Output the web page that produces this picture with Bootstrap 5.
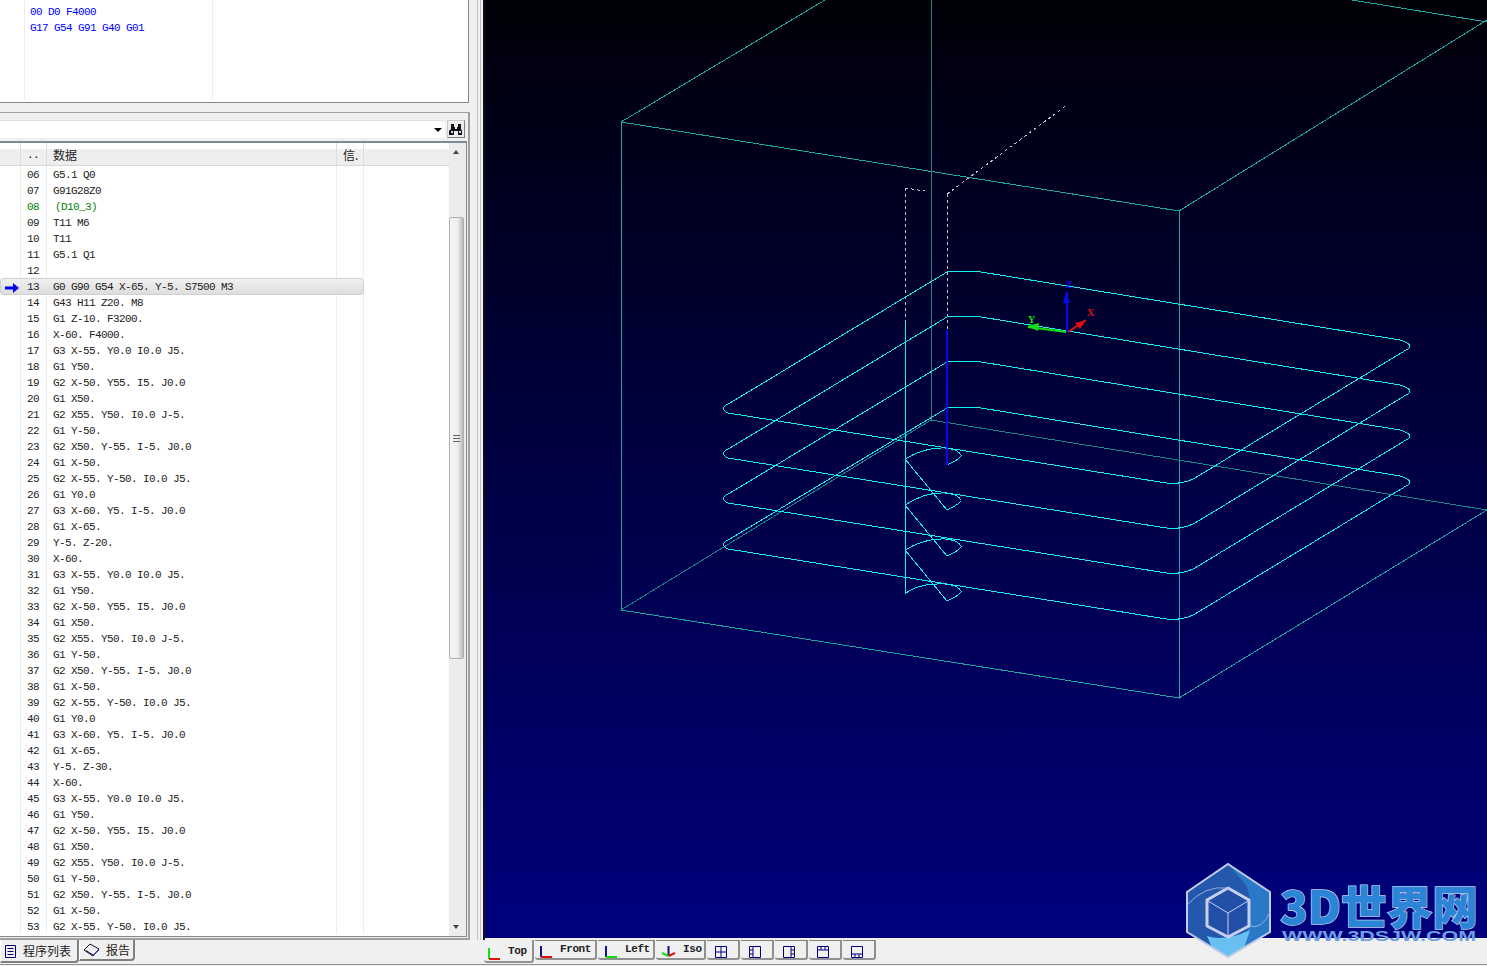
<!DOCTYPE html>
<html lang="en">

<head>
    <meta charset="UTF-8" />
    <meta name="viewport" content="width=device-width, initial-scale=1.0" />
    <title>NC Program Viewer</title>
    <link href="https://cdn.jsdelivr.net/npm/bootstrap@5.3.0/dist/css/bootstrap.min.css" rel="stylesheet" />
    <style>
        html, body {
            height: 966px;
            overflow: hidden;
        }

        body {
            background-color: #f0f0f0;
            font-family: "Liberation Mono", "Noto Sans CJK SC", monospace;
            font-size: 11px;
            line-height: 16px;
            letter-spacing: -0.6px;
            color: #222;
            position: relative;
        }

        .main-area { height: 940px; }

        /* left side */
        .left-pane { width: 470px; }

        .code-panel {
            height: 103px;
            width: 469px;
            background: #fff;
            border: 1px solid #808890;
            border-width: 0 1px 1px 0;
            position: relative;
            color: #0000ff;
        }

        .code-col {
            height: 100px;
            border-right: 1px solid #e4f0f0;
            padding-top: 4px;
        }

        .gutter-a { width: 25px; }
        .code-col-b { width: 188px; padding-left: 5px; }

        .list-panel {
            margin-top: 9px;
            height: 828px;
            border: 1px solid #a0a0a0;
            border-width: 1px 2px 2px 0;
            padding-top: 7px;
        }

        .combo-row { height: 21px; padding-right: 2px; }

        .combo-box {
            width: 445px;
            height: 18px;
            background: #fff;
            border-top: 1px solid #e0e0e0;
            border-radius: 0 3px 3px 0;
        }

        .caret-down {
            width: 0;
            height: 0;
            border: 4px solid transparent;
            border-top: 4px solid #000;
            border-bottom: 0;
            margin-right: 3px;
        }

        .find-btn {
            width: 18px;
            height: 18px;
            margin-left: 2px;
            border: 1px solid #c8c8c8;
            border-right-color: #808080;
            border-bottom-color: #808080;
            background: #ececec;
        }

        .grid-box {
            height: 796px;
            width: 467px;
            border: 1px solid #808890;
            border-width: 2px 1px 1px 0;
            background: #fff;
        }

        .grid-body { width: 449px; }

        .grid-head {
            height: 23px;
            background: linear-gradient(#fff 0, #fff 25%, #eeeeee 30%, #eeeeee 100%);
            border-bottom: 1px solid #d8d4dc;
        }

        .grid-head .cell { border-right: 1px solid #ddd; padding-top: 4px; }

        .grid-row { height: 16px; }
        .grid-row .cell { border-right: 1px solid #e8f0f0; padding-top: 1px; }

        .cell-mark { width: 21px; flex: none; }
        .cell-no { width: 26px; flex: none; padding-left: 6px; }
        .cell-data { width: 290px; flex: none; padding-left: 6px; white-space: pre; }
        .cell-info { width: 27px; flex: none; padding-left: 6px; }

        .row-note .cell-data { padding-left: 8px; }

        .grid-head .cell-data, .grid-head .cell-info {
            font-family: "Noto Sans CJK SC", sans-serif;
            font-size: 12px;
            letter-spacing: 0;
        }

        .row-note { color: #008000; }

        .row-current {
            background: linear-gradient(#f0f0f0, #dedede);
            border: 1px solid #d0d0d0;
            border-radius: 3px;
            width: 364px;
            height: 17px;
            margin-bottom: -1px;
            position: relative;
            z-index: 1;
        }

        .row-current .cell { border-right: 0; line-height: 15px; }
        .row-current .cell-mark { width: 20px; }

        .scroll-bar {
            width: 17px;
            background: #ececec;
            position: relative;
        }

        .scroll-thumb {
            position: absolute;
            top: 74px;
            left: 0;
            width: 15px;
            height: 442px;
            background: linear-gradient(90deg, #f4f4f4, #eeeeee 60%, #b8b8b8);
            border: 1px solid #b0b0b0;
            border-radius: 2px;
        }

        .grip {
            position: absolute;
            left: 3px;
            top: 217px;
            width: 7px;
            height: 7px;
            border-top: 1px solid #666;
            border-bottom: 1px solid #666;
        }

        .grip::after {
            content: "";
            position: absolute;
            left: 0;
            right: 0;
            top: 2px;
            border-top: 1px solid #666;
        }

        .arrow-up, .arrow-down {
            position: absolute;
            left: 4px;
            width: 0;
            height: 0;
            border: 3.5px solid transparent;
        }

        .arrow-up { top: 7px; border-bottom: 4px solid #444; border-top: 0; }
        .arrow-down { bottom: 7px; border-top: 4px solid #444; border-bottom: 0; }

        /* splitter and 3d view */
        .split-bar {
            width: 15px;
            background: #f0f0f0;
            border-right: 2px solid #101018;
            position: relative;
        }

        .split-bar::before {
            content: "";
            position: absolute;
            left: 7px;
            top: 0;
            bottom: 0;
            border-left: 1px solid #c0c0c0;
            border-right: 1px solid #c0c0c0;
            width: 4px;
        }

        .view-3d {
            width: 1002px;
            height: 938px;
            background: linear-gradient(#000008, #00007e);
        }

        .view-3d svg { display: block; }

        .axis-label {
            font-family: "Liberation Serif", serif;
            font-size: 10px;
            font-weight: 700;
            letter-spacing: 0;
        }

        /* bottom tabs */
        .tab-strip {
            height: 25px;
            font-family: "Noto Sans CJK SC", sans-serif;
            font-size: 12px;
            letter-spacing: 0;
            border-bottom: 1px solid #909090;
        }

        .sheet-tab {
            height: 21px;
            background: #f0f0f0;
            border: 0;
            border-right: 2px solid #808080;
            border-bottom: 2px solid #808080;
            border-left: 1px solid #fff;
            border-radius: 0 0 4px 0;
            padding: 0 0 0 3px;
            gap: 6px;
            line-height: 18px;
            white-space: nowrap;
        }

        .sheet-tab svg { flex: none; }
        .sheet-tab.is-on { height: 23px; }

        .tab-program { width: 79px; }
        .tab-report { width: 56px; }

        .view-tabs {
            margin-left: 349px;
            font-family: "Liberation Mono", monospace;
            font-size: 11px;
            font-weight: 700;
        }

        .view-tab {
            height: 20px;
            background: #f0f0f0;
            border-right: 2px solid #909090;
            border-bottom: 2px solid #909090;
            border-top: 1px solid #808080;
            border-radius: 0 0 3px 3px;
            padding-left: 7px;
            gap: 7px;
            letter-spacing: -0.4px;
            margin-right: 1px;
        }

        .view-tab.is-on { height: 23px; border-top: 0; }
        .tab-top { width: 50px; padding-left: 4px; padding-top: 3px; }
        .tab-front { width: 62px; padding-left: 5px; }
        .tab-left { width: 57px; padding-left: 7px; }
        .tab-iso { width: 50px; padding-left: 5px; }
        .tab-split { width: 33px; }

        .brand-mark {
            position: absolute;
            left: 1180px;
            top: 858px;
        }

        .brand-name {
            font-family: "Noto Sans CJK SC", sans-serif;
            font-weight: 900;
            font-size: 46px;
            letter-spacing: 0;
            fill: #2c84d6;
            stroke: #bcd0f0;
            stroke-width: 1.4px;
            paint-order: stroke;
        }

        .brand-url {
            font-family: "Liberation Sans", sans-serif;
            font-weight: 700;
            font-size: 14px;
            letter-spacing: 0;
            fill: #6e9fe4;
        }
    </style>
</head>

<body>
    <div class="main-area d-flex">

        <!-- Program listing -->
        <div class="left-pane flex-shrink-0">
            <div class="code-panel d-flex">
                <div class="code-col gutter-a"></div>
                <div class="code-col code-col-b">
                    <div>00 D0 F4000</div>
                    <div>G17 G54 G91 G40 G01</div>
                </div>
            </div>

            <div class="list-panel">
                <div class="combo-row d-flex">
                    <div class="combo-box d-flex align-items-center justify-content-end">
                        <span class="caret-down"></span>
                    </div>
                    <div class="find-btn d-flex align-items-center justify-content-center">
                        <svg width="14" height="13" viewBox="0 0 14 13">
                            <path d="M2 1h3v3h1v2h2V4h1V1h3v5l1 2v4H9V8H5v4H0V8l2-2z" fill="#101018" />
                            <path d="M2 8h2v2H2zM10 8h2v2h-2z" fill="#d8d8d8" />
                        </svg>
                    </div>
                </div>

                <div class="grid-box d-flex overflow-hidden">
                    <div class="grid-body flex-shrink-0">
                        <div class="grid-head d-flex">
                            <div class="cell cell-mark"></div>
                            <div class="cell cell-no">..</div>
                            <div class="cell cell-data">数据</div>
                            <div class="cell cell-info">信.</div>
                        </div>
                        <div id="rows"></div>
                    </div>
                    <div class="scroll-bar flex-shrink-0">
                        <span class="arrow-up"></span>
                        <div class="scroll-thumb"><span class="grip"></span></div>
                        <span class="arrow-down"></span>
                    </div>
                </div>
            </div>
        </div>

        <div class="split-bar flex-shrink-0"></div>

        <!-- 3D toolpath view -->
        <div class="view-3d flex-shrink-0">
            <svg width="1002" height="938" viewBox="485 0 1002 938" fill="none">
                <g stroke="#1fa8a0" shape-rendering="crispEdges">
                    <path d="M621 122L1179 211V698L621 610Z" />
                    <path d="M621 122L825 0M1179 211L1487 20M1352 0L1487 22" />
                    <path d="M1179 698L1487 510" />
                </g>
                <g stroke="#178a88" shape-rendering="crispEdges">
                    <path d="M931 0V420M931 420L621 610M931 420L1487 510" />
                </g>
                <g stroke="#c8c8c0" stroke-dasharray="3 3" shape-rendering="crispEdges">
                    <path d="M905 188V322M905 188L925 191M947 194V330M947 194L1067 105" />
                </g>
                <defs>
                    <path id="loop" d="M947 272Q951 271 975 271L1400 340Q1416 345 1406 350L1195 478Q1180 486 1160 482L728 413Q718 408 730 403Z" />
                </defs>
                <g stroke="#14f0f0" shape-rendering="crispEdges">
                    <use href="#loop" />
                    <use href="#loop" y="45" />
                    <use href="#loop" y="90" />
                    <use href="#loop" y="136" />
                    <path d="M905 322V594" />
                    <path d="M947 465Q962 458 961 455Q958 449 945 448Q925 447 905 459L947 510Q962 503 961 500Q958 494 945 493Q925 492 905 505L947 556Q962 549 961 546Q958 540 945 539Q925 538 905 550L947 601Q962 594 961 591Q958 585 945 584Q918 583 905 594" />
                </g>
                <path d="M947 330V465" stroke="#0808f0" stroke-width="2" shape-rendering="crispEdges" />
                <!-- axis triad -->
                <path d="M1067 332V292" stroke="#0a0af0" stroke-width="2" />
                <path d="M1066 293l-3 10h7z" fill="#0a0af0" />
                <path d="M1066 332L1028 327" stroke="#10e010" stroke-width="2" />
                <path d="M1027 326l12-3l-1 8z" fill="#10e010" />
                <path d="M1068 332L1086 320" stroke="#e01010" stroke-width="2" />
                <path d="M1086 320l-11 3l5 6z" fill="#e01010" />
                <text class="axis-label" x="1066" y="288" fill="#1010f0">Z</text>
                <text class="axis-label" x="1028" y="323" fill="#10e010">Y</text>
                <text class="axis-label" x="1087" y="316" fill="#e01010">X</text>
            </svg>
        </div>
    </div>

    <!-- Bottom tabs -->
    <div class="tab-strip d-flex">
        <div class="sheet-tab is-on tab-program d-flex align-items-center flex-shrink-0">
            <svg width="13" height="16" viewBox="0 0 13 16" fill="none" stroke="#000070">
                <path d="M1.500 2.500h10v12h-10zM3.500 5.500h6M3.500 8.500h6M3.500 11.500h6" />
            </svg>
            <span>程序列表</span>
        </div>
        <div class="sheet-tab tab-report d-flex align-items-center flex-shrink-0">
            <svg width="17" height="14" viewBox="0 0 17 14" fill="none" stroke="#101030">
                <path d="M1 7L7 1L16 6L10 13ZM3 7.500L10 12" />
                <path d="M9 13L16 7" stroke="#2030d0" />
            </svg>
            <span>报告</span>
        </div>

        <div class="view-tabs d-flex flex-shrink-0">
            <div class="view-tab is-on tab-top d-flex align-items-start flex-shrink-0">
                <svg width="13" height="13" viewBox="0 0 13 13" class="mt-1"><path d="M1 1V12" stroke="#10e010" stroke-width="2" /><path d="M1 12H12" stroke="#e01010" stroke-width="2" /></svg>
                <span>Top</span>
            </div>
            <div class="view-tab tab-front d-flex flex-shrink-0">
                <svg width="13" height="13" viewBox="0 0 13 13" class="mt-1"><path d="M1 1V12" stroke="#101090" stroke-width="2" /><path d="M1 12H12" stroke="#e01010" stroke-width="2" /></svg>
                <span>Front</span>
            </div>
            <div class="view-tab tab-left d-flex flex-shrink-0">
                <svg width="13" height="13" viewBox="0 0 13 13" class="mt-1"><path d="M1 1V12" stroke="#101090" stroke-width="2" /><path d="M1 12H12" stroke="#10e010" stroke-width="2" /></svg>
                <span>Left</span>
            </div>
            <div class="view-tab tab-iso d-flex flex-shrink-0">
                <svg width="15" height="13" viewBox="0 0 15 13" class="mt-1"><path d="M7.500 1V11" stroke="#101090" stroke-width="2" /><path d="M7.500 11L1 8" stroke="#10e010" stroke-width="2" /><path d="M7.500 11L14 8" stroke="#e01010" stroke-width="2" /></svg>
                <span>Iso</span>
            </div>
            <div class="view-tab tab-split d-flex flex-shrink-0">
                <svg width="14" height="14" viewBox="0 0 14 14" class="mt-1" fill="none" stroke="#000080"><path d="M1.500 1.500h11v11h-11zM7 1.500v11M1.500 7h11" /></svg>
            </div>
            <div class="view-tab tab-split d-flex flex-shrink-0">
                <svg width="14" height="14" viewBox="0 0 14 14" class="mt-1" fill="none" stroke="#000080"><path d="M1.500 1.500h11v11h-11zM5 1.500v11M1.500 5h3.500M1.500 9h3.500" /></svg>
            </div>
            <div class="view-tab tab-split d-flex flex-shrink-0">
                <svg width="14" height="14" viewBox="0 0 14 14" class="mt-1" fill="none" stroke="#000080"><path d="M1.500 1.500h11v11h-11zM9 1.500v11M9 5h3.500M9 9h3.500" /></svg>
            </div>
            <div class="view-tab tab-split d-flex flex-shrink-0">
                <svg width="14" height="14" viewBox="0 0 14 14" class="mt-1" fill="none" stroke="#000080"><path d="M1.500 1.500h11v11h-11zM1.500 5h11M5 1.500v3.500M9 1.500v3.500" /></svg>
            </div>
            <div class="view-tab tab-split d-flex flex-shrink-0">
                <svg width="14" height="14" viewBox="0 0 14 14" class="mt-1" fill="none" stroke="#000080"><path d="M1.500 1.500h11v11h-11zM1.500 9h11M5 9v3.500M9 9v3.500" /></svg>
            </div>
        </div>
    </div>

    <!-- Watermark logo lies over the view and the tab strip -->
    <svg class="brand-mark" width="307" height="104" viewBox="1180 858 307 104">
        <path d="M1228 864L1270 892V932L1228 957L1187 932V892Z" fill="#2458ac" />
        <path d="M1228 864L1270 892V932L1240 950Q1258 915 1246 885Z" fill="#2a78c8" />
        <path d="M1207 936Q1225 942 1250 930L1244 948L1228 957L1212 948Z" fill="#68c0f0" />
        <path d="M1228 864L1270 892V932L1228 957L1187 932V892Z" fill="none" stroke="#c0cce8" stroke-width="2" />
        <path d="M1228 888L1249 900V926L1228 937L1207 926V900Z" fill="#2250a8" stroke="#c8d0f0" stroke-width="3" stroke-linejoin="round" />
        <path d="M1208 901L1228 913L1248 901M1228 913V936" fill="none" stroke="#c8d0f0" />
        <path d="M1187 905Q1205 885 1228 888M1270 912Q1262 930 1250 926" fill="none" stroke="#8fb0e0" />
        <text class="brand-name" x="1280" y="924" textLength="198" lengthAdjust="spacingAndGlyphs">3D世界网</text>
        <text class="brand-url" x="1282" y="941" textLength="194" lengthAdjust="spacingAndGlyphs">WWW.3DSJW.COM</text>
    </svg>

    <script>
        const block = (zLine) => [
            zLine, 'X-60.',
            'G3 X-55. Y0.0 I0.0 J5.', 'G1 Y50.', 'G2 X-50. Y55. I5. J0.0', 'G1 X50.',
            'G2 X55. Y50. I0.0 J-5.', 'G1 Y-50.', 'G2 X50. Y-55. I-5. J0.0', 'G1 X-50.',
            'G2 X-55. Y-50. I0.0 J5.', 'G1 Y0.0', 'G3 X-60. Y5. I-5. J0.0', 'G1 X-65.'
        ];

        const lines = [
            'G5.1 Q0', 'G91G28Z0', '(D10_3)', 'T11 M6', 'T11', 'G5.1 Q1', '',
            'G0 G90 G54 X-65. Y-5. S7500 M3', 'G43 H11 Z20. M8', 'G1 Z-10. F3200.',
            'X-60. F4000.',
            ...block('').slice(2),
            ...block('Y-5. Z-20.'),
            ...block('Y-5. Z-30.')
        ].slice(0, 48);

        const rows = document.getElementById('rows');
        lines.forEach((text, i) => {
            const no = String(i + 6).padStart(2, '0');
            const row = document.createElement('div');
            const current = no === '13';
            row.className = 'grid-row d-flex' + (current ? ' row-current' : '') + (no === '08' ? ' row-note' : '');
            const mark = current
                ? '<svg width="15" height="10" viewBox="0 0 15 10" style="margin:2px 0 0 4px"><path d="M0 3.500h8V0l6 5l-6 5V6.500H0z" fill="#0000f0"/></svg>'
                : '';
            row.innerHTML = `<div class="cell cell-mark">${mark}</div><div class="cell cell-no">${no}</div>` +
                `<div class="cell cell-data"></div><div class="cell cell-info"></div>`;
            row.querySelector('.cell-data').textContent = text;
            rows.appendChild(row);
        });
    </script>
</body>

</html>
